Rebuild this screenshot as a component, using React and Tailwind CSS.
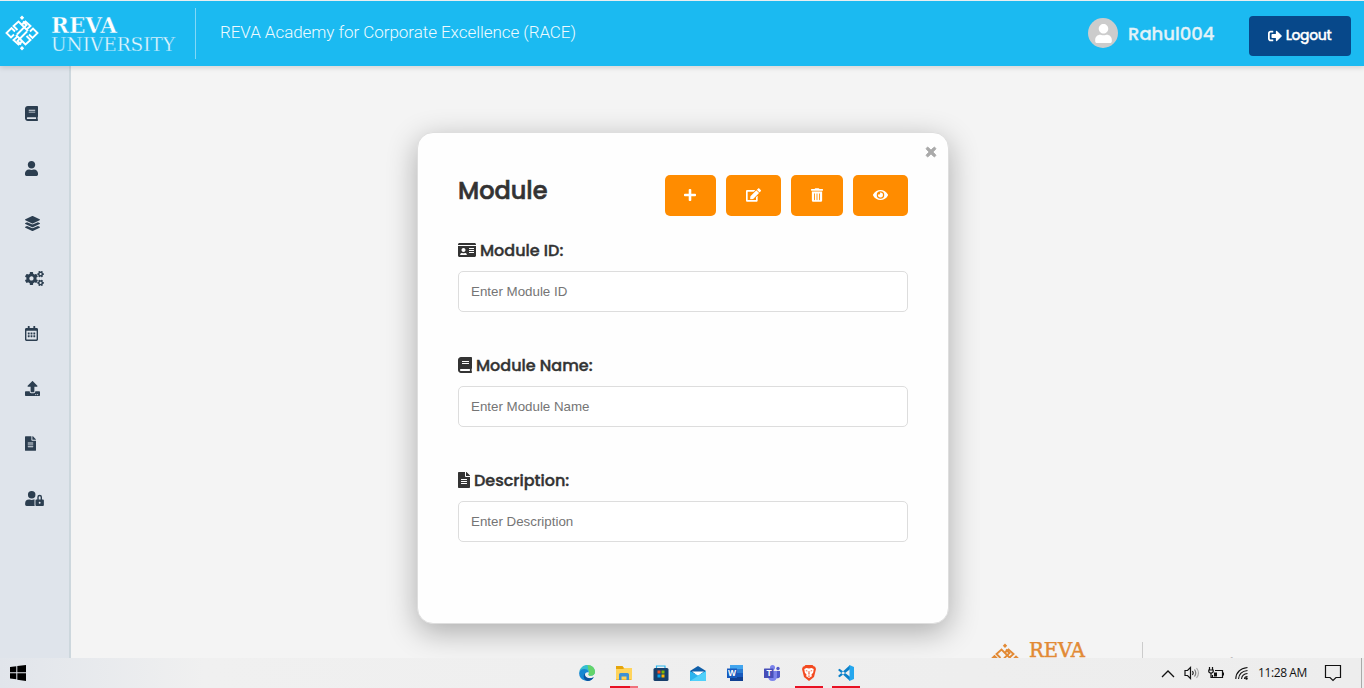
import React from "react";
import {
  FaBook, FaUser, FaLayerGroup, FaCogs, FaRegCalendarAlt, FaUpload, FaFileAlt, FaUserLock,
  FaSignOutAlt, FaPlus, FaEdit, FaTrashAlt, FaEye, FaTimes, FaIdCard,
} from "react-icons/fa";

const geo = "font-['Poppins','Inter',sans-serif]";

function Knot({ className }) {
  return (
    <svg viewBox="0 0 34 36" className={className} fill="none" stroke="currentColor" strokeWidth="1.9">
      <path d="M17 .5 19.2 2.7 17 4.9 14.8 2.7ZM17 31.1 19.2 33.3 17 35.5 14.8 33.3Z" fill="currentColor" stroke="none" />
      <path d="M9 19.500 6 22.500 1.500 18 6.500 13 10 16.500" />
      <path d="M25 16.500 28 13.500 32.500 18 27.500 23 24 19.500" />
      <path d="M12.500 15 8.500 11 13.500 6.500 23 16" />
      <path d="M21.500 21 25.500 25 20.500 29.500 11 20" />
      <path d="M12 19.500 21.500 10 18 6.500" />
      <path d="M22 16.500 12.500 26 16 29.500" />
      <path d="M16.500 10 20.500 6.500 25.500 11 21.500 14.500" />
      <path d="M17.500 26 13.500 29.500 8.500 25 12.500 21.500" />
    </svg>
  );
}

function Header() {
  return (
    <header className="relative z-10 flex h-[66px] shrink-0 items-start border-t border-[#e9eef0] bg-[#1bbaf1] shadow-[0_2px_5px_rgba(0,0,0,0.13)]">
      <div className="flex h-[65px] w-[195px] shrink-0 pl-[5px] pt-[14px] text-white">
        <Knot className="h-[36px] w-[34px]" />
        <div className="ml-[12px] pt-px font-['DejaVu_Serif',serif] leading-none">
          <svg width="68" height="18" className="block overflow-visible">
            <text x="0" y="16.5" fill="white" fontSize="22.5" fontWeight="700" stroke="#1bbaf1" strokeWidth="0.4" textLength="66" lengthAdjust="spacingAndGlyphs">REVA</text>
          </svg>
          <svg width="126" height="18" className="block overflow-visible">
            <text x="0" y="17" fill="#e9f9ff" fontSize="18.5" stroke="#1bbaf1" strokeWidth="0.35" textLength="124" lengthAdjust="spacing">UNIVERSITY</text>
          </svg>
        </div>
      </div>
      <div className="mt-[7px] h-[51px] w-px bg-[#82d8f7]" />
      <div className="ml-6 mt-[19px] whitespace-nowrap font-['Roboto',sans-serif] text-[17px] font-light leading-6 tracking-[-0.05px] text-[#eefaff]">
        REVA Academy for Corporate Excellence (RACE)
      </div>
      <div className="ml-auto flex pr-[13px]">
        <div className="mt-[17px] flex size-[30px] items-center justify-center rounded-full bg-[#ccc] text-white">
          <FaUser className="h-[19px] w-[17px]" />
        </div>
        <div className={`${geo} ml-[10px] mt-[17px] w-[121px] text-[18px] font-medium leading-[32px] text-[#e2f2f8] [-webkit-text-stroke:0.3px]`}>Rahul004</div>
        <button className={`${geo} mt-[15px] flex h-10 w-[102px] items-center justify-center rounded bg-[#07488a] pb-px pr-px text-[14px] font-medium tracking-[-0.4px] text-white [-webkit-text-stroke:0.3px]`}>
          <FaSignOutAlt className="mr-[4px] size-[14px]" />Logout
        </button>
      </div>
    </header>
  );
}

function Sidebar() {
  const items = [
    [FaBook, "w-[13px]"], [FaUser, "w-[13px]"], [FaLayerGroup, "w-[15px]"], [FaCogs, "w-[19px]"],
    [FaRegCalendarAlt, "w-[13px]"], [FaUpload, "w-[15px]"], [FaFileAlt, "w-[11px]"], [FaUserLock, "w-[19px]"],
  ];
  return (
    <nav className="flex w-[71px] shrink-0 flex-col border-r-2 border-[#cdd7dd] bg-[#dfe4eb] pl-[25px] pt-5 text-[#2c3e50]">
      {items.map(([Icon, w], i) => (
        <div key={i} className="flex h-[55px] items-center">
          <Icon className={`h-[15px] ${w}`} />
        </div>
      ))}
    </nav>
  );
}

function Field({ icon: Icon, size, label, placeholder }) {
  return (
    <div className="h-[115px]">
      <label className={`${geo} flex h-6 items-center gap-1 text-[16px] font-medium text-[#333] [-webkit-text-stroke:0.4px]`}>
        <Icon className={`h-4 ${size} [-webkit-text-stroke:0]`} /><span className="pt-px">{label}</span>
      </label>
      <input
        placeholder={placeholder}
        className="mt-[9px] block h-[41px] w-full rounded-[5px] border border-[#ddd] bg-white px-3 font-['Liberation_Sans',sans-serif] text-[13.333px] placeholder:text-[#757575]"
      />
    </div>
  );
}

function ModuleCard() {
  const btn = "flex h-[41px] items-center justify-center rounded-[5px] bg-[#ff8c00] pb-px text-white";
  return (
    <section className="relative mt-[66px] h-[492px] w-[532px] rounded-[16px] border border-[#dedede] bg-[#fefefe] px-10 pt-[42px] shadow-[0_8px_30px_rgba(0,0,0,0.3)]">
      <button className="absolute right-[10px] top-[12px] text-[#aaa]"><FaTimes className="size-[14px]" stroke="currentColor" strokeWidth="36" /></button>
      <div className="flex justify-between">
        <h1 className={`${geo} text-[24px] font-medium leading-8 text-[#333] [-webkit-text-stroke:0.6px]`}>Module</h1>
        <div className="flex gap-[10px]">
          <button className={`${btn} w-[51px] pr-px`}><FaPlus className="h-[14px] w-[12px]" /></button>
          <button className={`${btn} w-[55px]`}><FaEdit className="h-[14px] w-[15px]" /></button>
          <button className={`${btn} w-[52px]`}><FaTrashAlt className="h-[14px] w-[12px]" /></button>
          <button className={`${btn} w-[55px]`}><FaEye className="h-[14px] w-[15px]" /></button>
        </div>
      </div>
      <form className="pt-[22px]">
        <Field icon={FaIdCard} size="w-[18px]" label="Module ID:" placeholder="Enter Module ID" />
        <Field icon={FaBook} size="w-[14px]" label="Module Name:" placeholder="Enter Module Name" />
        <Field icon={FaFileAlt} size="w-[12px]" label="Description:" placeholder="Enter Description" />
      </form>
    </section>
  );
}

const Edge = () => (
  <svg viewBox="0 0 16 16" className="size-4">
    <path d="M.2 7C1 2.7 4.3 0 8.2 0 12.8 0 16 3.3 16 6.8c0 2.500-1.800 4-4.100 4-2 0-2.700-.7-2.400-1.500C10.700 7 8.700 4.800 5.800 4.800 3.400 4.800 1.300 5.700.2 7Z" fill="#35bfd0" />
    <path d="M8.500 0C13 0 16 3.300 16 6.800c0 2.500-1.800 4-4.100 4-2 0-2.700-.7-2.400-1.500.8-1.200.9-2.500.1-3.500Z" fill="#64d46a" />
    <path d="M.1 8C.3 5.500 3 3.800 5.600 4 8 4.200 9.800 5.600 9.800 7.600 7.500 6.800 6 8 6 10c0 3 4 4.600 8.800 2.200A8 8 0 0 1 .1 8Z" fill="#1687d2" />
    <path d="M6 8.300c-1 4 3.500 6.200 8.800 3.900A8 8 0 0 1 8.500 16C5 15.500 3.400 11 6 8.300Z" fill="#0c519c" />
  </svg>
);
const Folder = () => (
  <svg viewBox="0 0 16 14" className="h-[14px] w-4">
    <path d="M0 0h6.500L8 2h7.500v12H0Z" fill="#e5a50b" /><path d="M0 3h7l1.500-1H16v11.500H0Z" fill="#ffd45c" />
    <path d="M3 14V8.500Q3 7 4.500 7h7Q13 7 13 8.500V14h-2.500v-3.500h-5V14Z" fill="#3f91d5" />
  </svg>
);
const Store = () => (
  <svg viewBox="0 0 16 16" className="size-4">
    <path d="M3.500 4V1h8.500v3" fill="none" stroke="#28b5ed" strokeWidth="1.200" /><rect x=".5" y="3" width="15" height="13" rx="1.500" fill="#173f6b" />
    <path d="M4.500 5.500h3v3h-3Z" fill="#f25022" /><path d="M8.500 5.500h3v3h-3Z" fill="#7fba00" /><path d="M4.500 9.500h3v3h-3Z" fill="#00a4ef" /><path d="M8.500 9.500h3v3h-3Z" fill="#ffb900" />
  </svg>
);
const Mail = () => (
  <svg viewBox="0 0 16 15" className="h-[15px] w-4">
    <path d="M0 5 8 0l8 5v3H0Z" fill="#0f5ea8" /><path d="M2 5.500h12L8 10Z" fill="#fff" /><path d="M0 5 8 9.500 16 5v10H0Z" fill="#2bb4ee" /><path d="M0 15 16 5v10Z" fill="#50d0fa" />
  </svg>
);
const Word = () => (
  <svg viewBox="0 0 16 16" className="size-4">
    <path d="M3 0h13v4H3Z" fill="#41a5ee" /><path d="M3 4h13v4H3Z" fill="#2b7cd3" /><path d="M3 8h13v4H3Z" fill="#185abd" /><path d="M3 12h13v4H3Z" fill="#103f91" />
    <rect y="3.500" width="10" height="9.500" fill="#185abd" /><text x="5" y="11.300" textAnchor="middle" fontSize="8.500" fontWeight="700" fill="#fff" fontFamily="Liberation Sans">W</text>
  </svg>
);
const Teams = () => (
  <svg viewBox="0 0 16 16" className="size-4">
    <circle cx="8.500" cy="2.500" r="2.500" fill="#7b83eb" /><circle cx="14" cy="3.500" r="1.700" fill="#5059c9" /><path d="M10 6h6v6q-1.500 2-4 1Z" fill="#5059c9" /><path d="M4 6h9v5q0 5-4.500 5T4 11Z" fill="#7b83eb" />
    <rect y="3.500" width="9.500" height="9.500" rx=".5" fill="#464eb8" /><text x="5" y="11.300" textAnchor="middle" fontSize="8.500" fontWeight="700" fill="#fff" fontFamily="Liberation Sans">T</text>
  </svg>
);
const Brave = () => (
  <svg viewBox="0 0 14 16" className="h-4 w-[14px]">
    <path d="M3.500 0h7L12 1.500h1L14 4l-2 8-5 4-5-4L0 4l1-2.500h1Z" fill="#f34a20" />
    <path d="m2.300 4 2.200-1L7 3.500 9.500 3l2.200 1-.5 3.500-2 2.500 1 1L7 13l-3.200-2 1-1-2-2.500Z" fill="#fff" />
    <path d="m3.500 5 2 .8-.5 1ZM10.500 5l-2 .8.5 1ZM6.600 6h.8l.2 3-.6 1-.6-1ZM5.500 11l1.500-.6 1.500.6-1.500.8Z" fill="#f34a20" />
  </svg>
);
const Code = () => (
  <svg viewBox="0 0 16 16" className="size-4">
    <path d="M0 5 1.600 3.700 12 11.800V16ZM0 11l1.600 1.300L12 4.200V0Z" fill="#0b80c9" /><path d="m11.500 0 4.500 2v12l-4.500 2Z" fill="#25a7ee" />
  </svg>
);

function Tray() {
  return (
    <div className="ml-auto flex h-[30px] items-center text-[#111]">
      <svg width="14" height="9" className="mr-[9px]" fill="none" stroke="currentColor" strokeWidth="1.300"><path d="m1 8 6-6 6 6" /></svg>
      <svg width="17" height="14" viewBox="0 0 17 14" className="mr-[7px]" fill="none" stroke="currentColor" strokeWidth="1.200">
        <path d="M1 4.500h2.500L6.500 1.500v11l-3-3H1ZM8.500 5q1.500 2 0 4" /><path d="M10.500 3.500q2.500 3.500 0 7" stroke="#777" /><path d="M12.500 2q4 5 0 10" stroke="#aaa" />
      </svg>
      <svg width="16" height="13" viewBox="0 0 16 13" className="mr-[11px]" fill="none" stroke="currentColor" strokeWidth="1.200">
        <path d="M7 3.500h7.500v7H4.500V8M15.500 5.500v3M1.500 0v2.500M4.500 0v2.500M.8 3h4.400v2L3 6.500.8 5ZM3 6.500v4h2" /><path d="M6 5.500h3v4H6Z" fill="currentColor" stroke="none" />
      </svg>
      <svg width="13" height="14" viewBox="0 0 13 14" className="mr-[10px]" fill="none" stroke="currentColor" strokeWidth="1.100">
        <path d="M.8 13Q1 3 12.500 1.500M3.500 13Q4 5.500 12.500 4.500M6.500 13Q7 8 12.500 7.500M9.500 13q0-2.500 3-2.500" /><circle cx="11.500" cy="12.500" r="1.200" fill="currentColor" stroke="none" />
      </svg>
      <div className="w-[48px] whitespace-nowrap font-['Open_Sans','Noto_Sans',sans-serif] text-[12px] tracking-[-0.4px]">11:28 AM</div>
      <svg width="18" height="18" viewBox="0 0 18 18" className="ml-[18px] mr-[19px]" fill="none" stroke="currentColor" strokeWidth="1.200"><path d="M1.500 1.500h15v12H12l-3 3-3-3H1.500Z" /></svg>
      <div className="h-full w-[3px] border-l border-[#aaa]" />
    </div>
  );
}

function Taskbar() {
  const apps = [[Edge, 0], [Folder, 2], [Store, 0], [Mail, 0], [Word, 0], [Teams, 0], [Brave, 1], [Code, 1]];
  return (
    <footer className="flex h-[30px] shrink-0 bg-linear-to-r from-[#e1e5eb] via-[#f0f0f0] via-15% to-[#ededed]">
      <div className="w-[568px] pl-[10px] pt-[7px]">
        <svg width="16" height="16" fill="#000"><path d="M0 2 6.300 1.200v6H0ZM7.300 1 16 0v7.200H7.300ZM0 8.300h6.300v6L0 13.500ZM7.300 8.300H16V16l-8.700-1.200Z" /></svg>
      </div>
      <div className="flex">
        {apps.map(([Icon, mark], i) => (
          <div key={i} className="flex h-[30px] w-[37px] flex-col items-center">
            <div className="flex h-7 items-center pt-[2px]"><Icon /></div>
            {mark > 0 && <div className="flex h-[2px] w-7"><div className="flex-1 bg-[#e81123]" />{mark === 2 && <div className="w-2 bg-[#f1707a]" />}</div>}
          </div>
        ))}
      </div>
      <Tray />
    </footer>
  );
}

export default function App() {
  return (
    <div className="flex h-[688px] w-[1364px] flex-col overflow-hidden bg-[#f4f4f4]">
      <Header />
      <div className="flex h-[592px] overflow-hidden">
        <Sidebar />
        <main className="relative flex flex-1 pl-[346px]">
          <ModuleCard />
          <div className="absolute left-[917px] top-[576px] flex h-4 w-[360px] overflow-hidden text-[#e28a35]">
            <Knot className="mt-px h-[36px] w-[34px] shrink-0" />
            <svg width="58" height="20" className="ml-[7px] shrink-0">
              <text x="0" y="15" fill="currentColor" stroke="currentColor" strokeWidth="0.5" fontSize="20" textLength="56" lengthAdjust="spacingAndGlyphs" fontFamily="DejaVu Serif">REVA</text>
            </svg>
            <div className="ml-[55px] h-4 w-px shrink-0 bg-[#ccc]" />
            <div className="ml-[9px] mt-[13.5px] shrink-0 whitespace-nowrap font-['Roboto',sans-serif] text-[11px] font-light leading-[14px] text-[#999]">REVA Academy for Corporate Excellence</div>
          </div>
        </main>
      </div>
      <Taskbar />
    </div>
  );
}
